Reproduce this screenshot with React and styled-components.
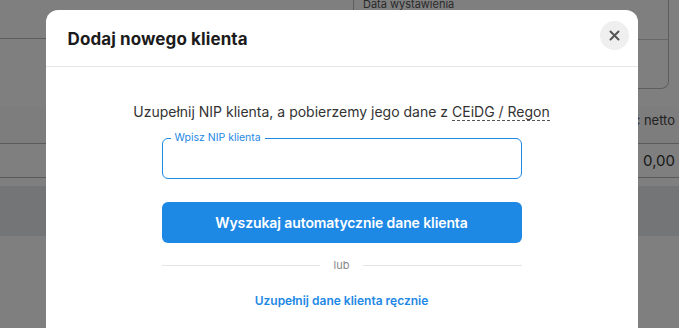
import React from 'react';
import styled, { createGlobalStyle } from 'styled-components';

const GlobalStyle = createGlobalStyle`
    html, body {
        margin: 0;
        padding: 0;
        background: #fff;
    }
    * {
        box-sizing: border-box;
    }
`

const Page = styled.div`
    position: relative;
    width: 679px;
    height: 328px;
    overflow: hidden;
    background: #fff;
    font-family: Inter, "Noto Sans", sans-serif;
    color: #222;
`

const TopArea = styled.div`
    display: flex;
    height: 107px;
`

const TopLeft = styled.div`
    flex: 1;
    height: 39px;
    border-bottom: 1px solid #b8b8b8;
`

const DateCard = styled.div`
    width: 316px;
    height: 99px;
    margin: -10px 10px 0 0;
    border: 1px solid #bcbcbc;
    border-top: none;
    border-radius: 0 0 8px 8px;
    display: flex;
    flex-direction: column;
`

const DateLabel = styled.div`
    height: 50px;
    padding: 7px 0 0 9px;
    font-size: 11px;
    color: #555;
    border-bottom: 1px solid #cfcfcf;
`

const TableHead = styled.div`
    height: 36px;
    display: flex;
    justify-content: flex-end;
    padding: 5px 4px 0 0;
    font-size: 13px;
    color: #444;
    background: #fbfbfb;
`

const TableRow = styled.div`
    height: 35px;
    display: flex;
    align-items: center;
    justify-content: flex-end;
    padding-right: 4px;
    font-size: 15px;
    color: #333;
    border-top: 1px solid #b4b4b4;
    border-bottom: 1px solid #b4b4b4;
`

const Band = styled.div`
    height: 50px;
    margin-top: 8px;
    background: #e8eaed;
`

const Overlay = styled.div`
    position: absolute;
    inset: 0;
    background: rgba(0, 0, 0, 0.5);
    display: flex;
    justify-content: center;
    padding-top: 10px;
`

const Modal = styled.div`
    width: 592px;
    height: 340px;
    margin-left: 4px;
    background: #fff;
    border-radius: 12px;
    display: flex;
    flex-direction: column;
`

const Header = styled.div`
    height: 57px;
    display: flex;
    align-items: center;
    justify-content: space-between;
    padding: 0 9px 0 22px;
    border-bottom: 1px solid #e6e6e6;
`

const Title = styled.h2`
    margin: 1px 0 0;
    font-size: 17px;
    font-weight: 700;
    color: #1b1b1b;
    letter-spacing: 0.1px;
`

const CloseButton = styled.button`
    width: 29px;
    height: 29px;
    margin-bottom: 5px;
    border: none;
    border-radius: 50%;
    background: #efefef;
    display: flex;
    align-items: center;
    justify-content: center;
    padding: 0;
    color: #555;
`

const Body = styled.div`
    display: flex;
    flex-direction: column;
    align-items: center;
    padding-top: 35px;
`

const Lead = styled.p`
    margin: 0;
    font-size: 14px;
    line-height: 20px;
    color: #333;
`

const Dashed = styled.span`
    border-bottom: 1px dashed #555;
`

const Field = styled.div`
    position: relative;
    width: 360px;
    margin-top: 16px;
`

const Input = styled.input`
    width: 100%;
    height: 41px;
    border: 1px solid #1e88e5;
    border-radius: 6px;
    outline: none;
    padding: 0 13px;
    font-family: inherit;
    font-size: 14px;
`

const FloatLabel = styled.label`
    position: absolute;
    top: -7px;
    left: 9px;
    padding: 0 4px;
    background: #fff;
    font-size: 10.5px;
    line-height: 14px;
    color: #1e88e5;
`

const PrimaryButton = styled.button`
    width: 360px;
    height: 41px;
    margin-top: 23px;
    border: none;
    border-radius: 6px;
    background: #1e88e5;
    color: #fff;
    font-family: inherit;
    font-size: 14px;
    font-weight: 600;
    letter-spacing: -0.1px;
`

const Divider = styled.div`
    width: 360px;
    margin-top: 15px;
    display: flex;
    align-items: center;
    gap: 14px;
    font-size: 11px;
    line-height: 14px;
    color: #888;

    &::before, &::after {
        content: '';
        flex: 1;
        height: 1px;
        background: #e4e4e4;
    }
`

const ManualLink = styled.a`
    margin-top: 21px;
    font-size: 12px;
    font-weight: 600;
    color: #1e88e5;
    text-decoration: none;
`

export default function App() {
    return (
        <>
            <GlobalStyle />
            <Page>
                <TopArea>
                    <TopLeft />
                    <DateCard>
                        <DateLabel>Data wystawienia</DateLabel>
                    </DateCard>
                </TopArea>
                <TableHead>Wartość netto</TableHead>
                <TableRow>0,00</TableRow>
                <Band />
                <Overlay>
                    <Modal>
                        <Header>
                            <Title>Dodaj nowego klienta</Title>
                            <CloseButton aria-label="Zamknij">
                                <svg width="11" height="11" viewBox="0 0 11 11">
                                    <path d="M1.5 1.5 L9.5 9.5 M9.5 1.5 L1.5 9.5" stroke="currentColor" strokeWidth="2" strokeLinecap="round" />
                                </svg>
                            </CloseButton>
                        </Header>
                        <Body>
                            <Lead>
                                Uzupełnij NIP klienta, a pobierzemy jego dane z <Dashed>CEiDG / Regon</Dashed>
                            </Lead>
                            <Field>
                                <FloatLabel>Wpisz NIP klienta</FloatLabel>
                                <Input />
                            </Field>
                            <PrimaryButton>Wyszukaj automatycznie dane klienta</PrimaryButton>
                            <Divider>lub</Divider>
                            <ManualLink href="#">Uzupełnij dane klienta ręcznie</ManualLink>
                        </Body>
                    </Modal>
                </Overlay>
            </Page>
        </>
    );
}
